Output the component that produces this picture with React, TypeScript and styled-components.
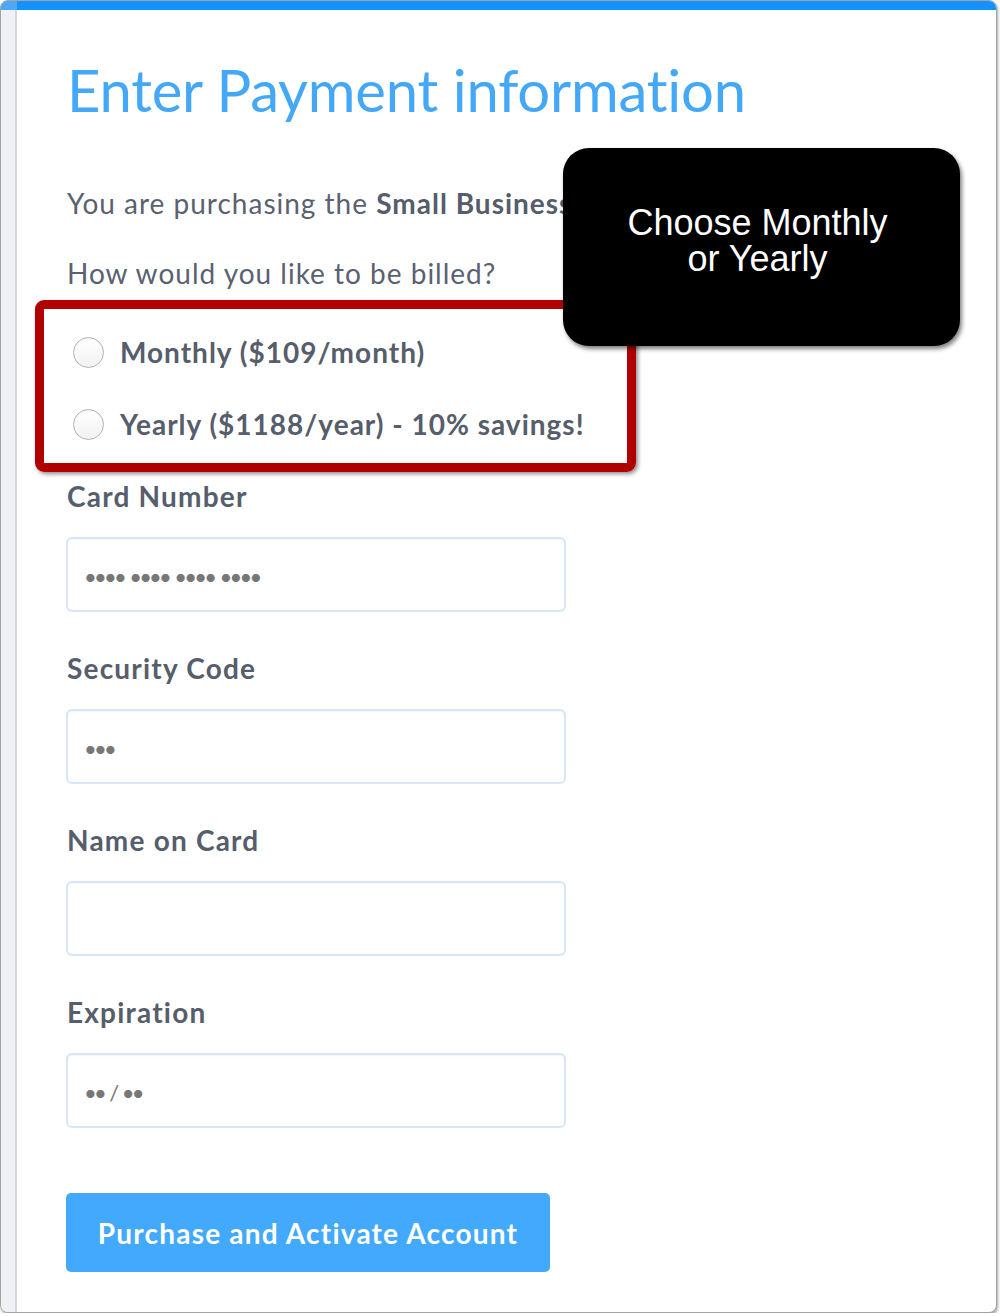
import React from "react";
import styled, { createGlobalStyle } from "styled-components";

const Global = createGlobalStyle`
  html, body { margin: 0; padding: 0; background: #ffffff; }
  * { box-sizing: border-box; }
`;

const Frame = styled.div`
  position: relative;
  width: 997px;
  height: 1313px;
  border: 1px solid #a3a3a3;
  border-radius: 8px;
  box-shadow: 1px 2px 3px rgba(0, 0, 0, 0.35);
  overflow: hidden;
  display: flex;
  flex-direction: column;
  background: #ffffff;
`;

const TopBar = styled.div`
  height: 9px;
  flex: none;
  display: flex;
  background: #1391fc;
`;

const TopBarCap = styled.div`
  width: 16px;
  background: #4ea7f7;
`;

const Body = styled.div`
  flex: 1;
  display: flex;
`;

const Sidebar = styled.div`
  width: 16px;
  flex: none;
  background: #eff1f4;
  border-right: 2px solid #d3d8df;
`;

const Content = styled.main`
  flex: 1;
  padding: 45px 0 0 50px;
  font-family: Lato, "Open Sans", sans-serif;
  color: #5a6170;
`;

const Title = styled.h1`
  margin: 0;
  font-size: 58px;
  line-height: 70px;
  font-weight: 400;
  color: #44a8f7;
  letter-spacing: -0.2px;
`;

const Para = styled.p<{ $top: number }>`
  margin: ${(p) => p.$top}px 0 0 0;
  font-size: 28px;
  line-height: 36px;
  letter-spacing: 1px;
  color: #5a6170;
  white-space: nowrap;
  b { font-weight: 700; color: #555c6a; }
`;

const Highlight = styled.div`
  margin: 9px 0 0 -32px;
  width: 601px;
  border: 9px solid #b00000;
  border-radius: 9px;
  box-shadow: 2px 2px 4px rgba(0, 0, 0, 0.45);
  padding: 25px 0 21px 29px;
  display: flex;
  flex-direction: column;
  gap: 36px;
`;

const RadioRow = styled.label`
  display: flex;
  align-items: center;
  gap: 16px;
  height: 36px;
  font-size: 28px;
  font-weight: 700;
  letter-spacing: 1px;
  color: #565d6b;
  cursor: pointer;
`;

const RadioCircle = styled.input.attrs({ type: "radio" })`
  appearance: none;
  margin: 0;
  width: 31px;
  height: 31px;
  border-radius: 50%;
  border: 1px solid #b4b4b4;
  background: linear-gradient(#ffffff, #f2f2f2);
  box-shadow: inset 0 1px 1px rgba(0, 0, 0, 0.05);
  flex: none;
`;

const Field = styled.div<{ $top: number }>`
  margin-top: ${(p) => p.$top}px;
  display: flex;
  flex-direction: column;
  gap: 23px;
`;

const Label = styled.label`
  font-size: 28px;
  line-height: 36px;
  font-weight: 700;
  letter-spacing: 1.2px;
  color: #565d6b;
`;

const Input = styled.input`
  width: 500px;
  height: 75px;
  margin-left: -1px;
  border: 2px solid #d5e7f8;
  border-radius: 6px;
  box-shadow: inset 0 1px 2px rgba(0, 0, 0, 0.04);
  padding: 4px 17px 0 16px;
  font-family: Lato, "Open Sans", sans-serif;
  font-size: 22px;
  color: #555;
  outline: none;
  &::placeholder {
    color: #777777;
    letter-spacing: -2.8px;
    word-spacing: 2.5px;
  }
`;

const Button = styled.button`
  margin: 65px 0 0 -1px;
  width: 484px;
  height: 79px;
  border: none;
  border-radius: 5px;
  background: #42a9fd;
  color: #ffffff;
  font-family: Lato, "Open Sans", sans-serif;
  font-size: 28px;
  font-weight: 700;
  letter-spacing: 1.2px;
  cursor: pointer;
`;

const Callout = styled.div`
  position: absolute;
  left: 562px;
  top: 147px;
  width: 397px;
  height: 198px;
  border-radius: 26px;
  background: #000000;
  box-shadow: 2px 3px 4px rgba(0, 0, 0, 0.5);
  padding: 57px 8px 0 0;
  color: #ffffff;
  font-family: "Liberation Sans", Arial, sans-serif;
  font-size: 36px;
  line-height: 36px;
  text-align: center;
`;

const fields = [
  { id: "card", label: "Card Number", placeholder: "•••• •••• •••• ••••" },
  { id: "cvc", label: "Security Code", placeholder: "•••" },
  { id: "name", label: "Name on Card", placeholder: "" },
  { id: "exp", label: "Expiration", placeholder: "•• / ••" },
];

export default function App() {
  return (
    <>
      <Global />
      <Frame>
        <TopBar>
          <TopBarCap />
        </TopBar>
        <Body>
          <Sidebar />
          <Content>
            <Title>Enter Payment information</Title>
            <Para $top={60}>
              You are purchasing the <b>Small Business</b> plan.
            </Para>
            <Para $top={34}>How would you like to be billed?</Para>
            <Highlight>
              <RadioRow>
                <RadioCircle name="billing" />
                Monthly ($109/month)
              </RadioRow>
              <RadioRow>
                <RadioCircle name="billing" />
                Yearly ($1188/year) - 10% savings!
              </RadioRow>
            </Highlight>
            {fields.map((f, i) => (
              <Field key={f.id} $top={i === 0 ? 6 : 38}>
                <Label htmlFor={f.id}>{f.label}</Label>
                <Input id={f.id} placeholder={f.placeholder} />
              </Field>
            ))}
            <Button>Purchase and Activate Account</Button>
          </Content>
        </Body>
        <Callout>
          Choose Monthly
          <br />
          or Yearly
        </Callout>
      </Frame>
    </>
  );
}
